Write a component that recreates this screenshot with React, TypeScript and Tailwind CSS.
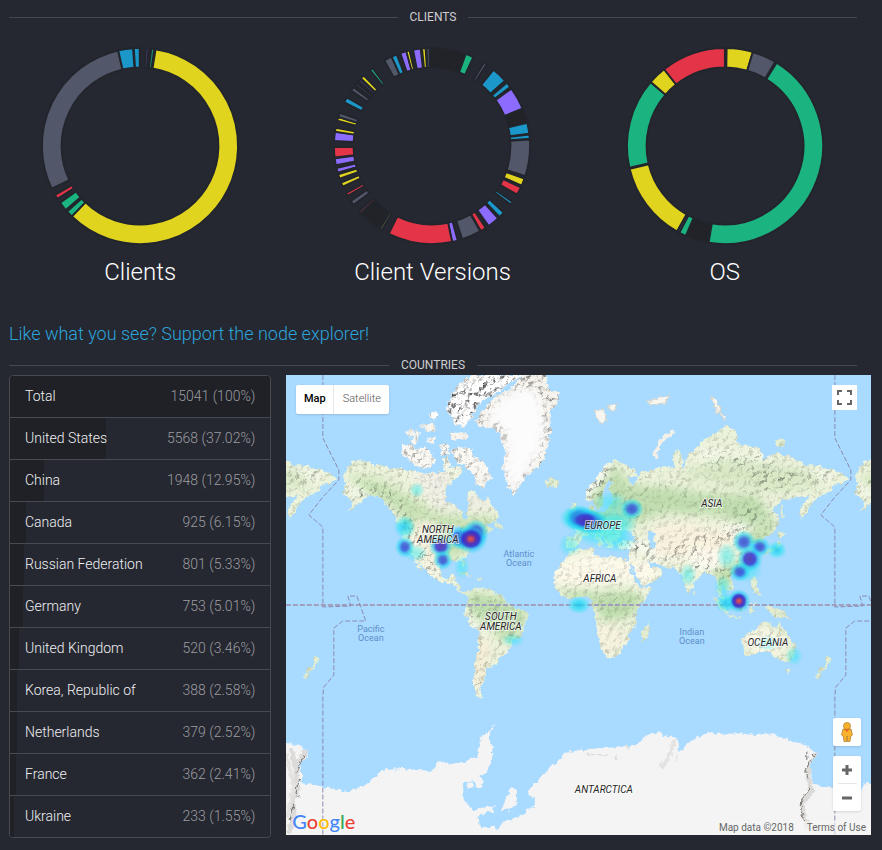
// App.tsx
import React from "react";

type Slice = [start: number, end: number, color: string];

const YELLOW = "#e0d41f";
const GREEN = "#1bb380";
const RED = "#e43447";
const BLUE = "#1b98c9";
const PURPLE = "#8c6cff";
const GREY = "#52586a";
const DARK = "#212329";

// Angles are degrees, clockwise from the top of the ring
const clients: Slice[] = [
  [3.4, 5, "#4b3f7a"],
  [6.6, 8.4, "#188c6c"],
  [9.2, 224, YELLOW],
  [224.2, 228, GREEN],
  [229.2, 234.6, GREEN],
  [237.4, 240, RED],
  [244.2, 347, GREY],
  [347.2, 355.9, BLUE],
  [356.4, 359.8, BLUE],
];

const versions: Slice[] = [
  [-2, 20, DARK],
  [20.2, 24.9, GREEN],
  [32, 33.8, GREY],
  [38.9, 48.1, BLUE],
  [49.8, 52.9, BLUE],
  [54.2, 67.5, PURPLE],
  [67.6, 76, DARK],
  [76.3, 82.7, BLUE],
  [83.3, 85.7, BLUE],
  [86.2, 107.9, GREY],
  [109.4, 113.8, YELLOW],
  [115, 119.7, RED],
  [124.8, 126.6, BLUE],
  [132.9, 136.4, BLUE],
  [137.6, 144.7, PURPLE],
  [146.8, 150.1, RED],
  [150.6, 162, GREY],
  [164.8, 168.1, PURPLE],
  [168.2, 206.2, RED],
  [210.8, 212.3, "#555a3c"],
  [213, 226, DARK],
  [226.6, 228.2, "#63303f"],
  [233.1, 235.9, GREY],
  [239.4, 241.2, RED],
  [245.6, 248.1, YELLOW],
  [250.5, 253.2, YELLOW],
  [254.3, 257, PURPLE],
  [258.7, 262.7, PURPLE],
  [263.3, 269.4, RED],
  [273, 278.3, PURPLE],
  [278.4, 280.7, YELLOW],
  [285, 287.1, YELLOW],
  [287.3, 289.8, GREY],
  [296.5, 299.6, BLUE],
  [304.5, 306.8, GREY],
  [308.4, 310, "#383c4a"],
  [311.4, 313, "#40386b"],
  [313.6, 315.9, YELLOW],
  [320.8, 322.6, GREEN],
  [330.9, 335.6, GREY],
  [335.7, 338.9, BLUE],
  [341.2, 344.8, PURPLE],
  [344.9, 346.7, YELLOW],
  [348.9, 353.3, PURPLE],
  [354.2, 356.2, YELLOW],
  [356.8, 358.5, GREY],
];

const systems: Slice[] = [
  [1, 16.4, YELLOW],
  [16.5, 30.8, GREY],
  [31.8, 189.6, GREEN],
  [190, 203, DARK],
  [203.6, 207.8, GREEN],
  [207.8, 209.3, "#40386b"],
  [209.4, 256.5, YELLOW],
  [257.2, 310.6, GREEN],
  [310.8, 321.5, YELLOW],
  [321.6, 359.9, RED],
];

const countries = [
  { name: "Total", nodes: 15041, share: "100" },
  { name: "United States", nodes: 5568, share: "37.02" },
  { name: "China", nodes: 1948, share: "12.95" },
  { name: "Canada", nodes: 925, share: "6.15" },
  { name: "Russian Federation", nodes: 801, share: "5.33" },
  { name: "Germany", nodes: 753, share: "5.01" },
  { name: "United Kingdom", nodes: 520, share: "3.46" },
  { name: "Korea, Republic of", nodes: 388, share: "2.58" },
  { name: "Netherlands", nodes: 379, share: "2.52" },
  { name: "France", nodes: 362, share: "2.41" },
  { name: "Ukraine", nodes: 233, share: "1.55" },
];

const ringPath = (start: number, end: number) => {
  const at = (deg: number, r: number) => {
    const rad = ((deg - 90) * Math.PI) / 180;
    return `${(98 + r * Math.cos(rad)).toFixed(2)} ${(98 + r * Math.sin(rad)).toFixed(2)}`;
  };
  const large = end - start > 180 ? 1 : 0;
  return `M${at(start, 98)}A98 98 0 ${large} 1 ${at(end, 98)}L${at(end, 78.5)}A78.5 78.5 0 ${large} 0 ${at(start, 78.5)}Z`;
};

const Donut: React.FC<{ title: string; slices: Slice[] }> = ({ title, slices }) => (
  <div className="flex flex-col items-center">
    <svg width="196" height="196" viewBox="0 0 196 196" className="overflow-visible" role="img" aria-label={title}>
      {slices.map(([start, end, color]) => (
        <path key={start} d={ringPath(start, end)} fill={color} stroke="#22252c" strokeWidth="1.8" />
      ))}
    </svg>
    <h3 className="mt-3 text-2xl font-light text-white">{title}</h3>
  </div>
);

const SectionTitle: React.FC<{ children: React.ReactNode }> = ({ children }) => (
  <h2 className="flex h-5 items-center gap-3 text-xs text-[#cdced0]">
    <span className="h-px flex-1 bg-[#464850]" />
    {children}
    <span className="h-px flex-1 bg-[#464850]" />
  </h2>
);

const CountryTable: React.FC = () => (
  <div className="overflow-hidden rounded border border-[#484a52]">
    <table className="w-full border-separate border-spacing-0 text-sm">
      <tbody>
        {countries.map((c) => (
          <tr
            key={c.name}
            className="group"
            style={{
              backgroundImage: `linear-gradient(to right, #1f2127 ${c.share}%, transparent ${c.share}%)`,
            }}
          >
            <th
              scope="row"
              className="h-[42px] border-b border-[#484a52] pb-0.5 pl-[15px] text-left font-light text-[#f0f0f1] group-last:h-[41px] group-last:border-b-0"
            >
              {c.name}
            </th>
            <td className="border-b border-[#484a52] pb-0.5 pr-[15px] text-right font-light text-[#9b9ca0] group-last:border-b-0">
              {c.nodes} ({c.share}%)
            </td>
          </tr>
        ))}
      </tbody>
    </table>
  </div>
);

// ---- map ----

const MAINLAND = [
  // North America
  "M57 102L60 95 68 85 78 86 88 90 97 90 106 94 115 92 122 97 129 96 139 99 150 97 158 96 157 84 161 82 165 93 170 91 176 93 176 100 169 104 163 110 161 116 159 126 168 130 176 136 176 141 179 147 182 142 181 138 183 131 182 123 182 116 189 116 193 123 198 127 202 122 206 130 213 141 208 147 202 148 199 149 203 152 206 156 199 160 193 161 188 167 185 177 178 183 180 192 177 192 175 186 165 186 156 187 154 197 158 203 163 203 165 199 169 199 168 207 174 208 174 215 178 217 182 216 183 219 179 219 175 218 168 211 159 207 155 207 144 201 142 196 136 190 131 183 134 189 137 196 134 194 129 188 127 180 121 177 117 168 117 152 111 145 104 133 94 123 84 120 77 126 68 132 60 137 68 127 63 124 57 118 60 110Z",
  // South America
  "M182 218L191 212 205 215 213 220 219 223 222 229 230 233 238 235 243 239 240 247 238 256 233 263 225 268 223 274 219 280 212 284 212 289 205 291 200 294 200 300 198 306 195 312 195 318 198 324 192 322 188 313 187 306 189 296 189 287 192 275 194 256 185 250 178 238 179 232 182 227Z",
  // Africa
  "M284 176L307 173 309 179 321 184 324 181 338 183 342 188 345 198 349 206 354 213 365 212 361 223 350 236 350 251 343 259 343 265 338 272 331 281 321 283 318 278 314 268 310 254 311 243 306 232 306 224 300 221 287 223 281 224 274 218 268 210 269 199 274 190 280 183Z",
  // Europe and Asia
  "M280 173L280 162 290 161 291 156 287 151 296 145 300 141 304 138 304 131 308 130 309 138 320 137 323 131 327 125 336 123 326 122 323 114 328 106 324 104 318 113 317 120 317 128 312 136 307 125 301 127 300 117 310 104 318 91 330 85 337 88 350 95 352 102 341 102 344 109 350 107 355 97 362 97 370 94 378 91 388 93 387 78 393 75 397 82 397 96 401 80 407 76 417 65 432 57 441 50 450 56 454 70 465 72 474 73 478 84 492 78 506 82 520 90 535 91 549 95 563 104 556 108 546 111 546 115 535 121 525 128 523 134 516 144 514 137 516 130 525 120 513 122 496 125 486 136 493 142 492 151 485 160 478 164 478 174 473 177 472 171 465 168 460 170 466 173 464 177 467 185 461 194 450 199 444 201 448 211 442 217 437 211 435 218 441 228 436 225 432 217 431 205 424 198 417 199 407 209 407 213 402 218 397 204 395 199 388 193 374 191 365 186 361 185 367 193 372 192 377 197 367 207 356 212 348 199 342 188 344 174 333 175 331 168 343 165 351 166 346 159 343 157 337 155 333 162 330 167 326 167 327 173 322 173 320 165 311 157 318 167 315 173 310 164 305 159 297 162 293 168 290 173Z",
];

const ISLANDS = [
  "M286 148L294 146 294 142 290 134 290 128 285 128 286 137Z",
  "M279 145L284 144 284 138 280 139Z",
  "M259 105L267 103 274 106 272 111 264 112 260 110Z",
  "M493 157L500 158 496 163 492 162Z",
  "M494 164L495 171 489 176 479 179 483 174 490 172Z",
  "M495 143L498 141 497 130 495 132Z",
  "M428 222L436 228 444 238 441 240 432 231Z",
  "M443 240L456 243 455 244 443 242Z",
  "M448 227L458 221 462 224 458 236 450 234Z",
  "M463 229L472 227 466 232 469 238 464 237Z",
  "M465 203L470 203 472 213 475 221 468 218Z",
  "M479 231L488 232 499 236 506 245 498 242 490 243 484 237Z",
  "M362 247L364 254 360 265 356 266 355 258Z",
  "M407 215L410 219 408 221Z",
  "M539 279L545 286 541 292 536 297 532 304 529 303 533 296 540 290Z",
  "M499 293L505 293 503 298Z",
  "M172 198L180 197 187 202 179 200Z",
  "M189 203L197 204 193 206Z",
  "M209 147L216 150 216 153 208 152Z",
  "M488 65L498 64 499 70 492 72Z",
  "M455 264L460 259 470 254 476 248 483 247 486 251 490 254 493 247 498 254 504 262 510 271 509 280 504 287 498 287 490 283 485 277 475 277 465 281 458 280Z",
];

const ARCTIC = [
  "M165 75L174 72 184 74 190 82 200 90 206 103 200 108 198 114 190 110 187 98 178 90 172 88Z",
  "M160 32L167 18 174 8 188 0 237 0 222 9 208 20 198 24 190 34 184 44 178 53 168 48Z",
  "M115 70L126 69 130 75 140 72 150 86 146 92 136 94 124 86 116 80Z",
  "M119 57L126 54 130 60 124 63Z",
  "M134 50L146 48 150 55 142 57Z",
  "M154 70L163 68 163 80 156 80Z",
  "M164 58L180 57 182 64 166 66Z",
  "M142 40L150 36 153 42 146 45Z",
  "M125 68L131 54 134 58 130 69Z",
  "M142 62L150 62 148 69 141 68Z",
];

const GREENLAND =
  "M194 52L190 45 196 36 203 29 209 22 218 17 227 12 237 0 259 0 262 15 274 17 272 27 264 38 265 55 261 75 257 88 244 98 232 112 229 121 222 112 217 92 220 78 214 58 206 52Z";

const ANTARCTICA =
  "M-20 366L0 367 8 369 20 374 23 380 16 386 13 392 17 400 15 408 33 411 62 417 76 411 82 408 88 402 97 395 117 394 130 395 147 396 153 386 165 389 177 387 192 382 192 374 195 362 203 357 211 348 202 362 207 372 207 382 201 397 190 405 177 407 178 425 187 434 200 434 199 440 191 446 197 452 209 452 211 457 217 447 232 442 249 430 249 423 242 420 245 412 255 402 261 395 271 387 279 378 300 374 320 373 341 371 351 369 361 360 371 357 380 361 391 363 393 377 406 365 422 358 440 359 452 358 470 360 486 358 500 364 519 370 532 378 526 386 525 394 527 410 549 412 562 416 574 416 580 408 605 407 605 480 -20 480Z";

const DATE_LINE =
  "M37 0V63L53 95V105L37 122L23 140L37 152V232L65 231L62 221H71L80 246H57L48 253V300L38 312L37 320V460";

type Spot = [x: number, y: number, rx: number, ry: number, kind: "faint" | "cool" | "warm" | "deep" | "hot"];

const spots: Spot[] = [
  [131, 115, 8, 8, "faint"],
  [119, 152, 11, 12, "cool"],
  [130, 178, 12, 9, "faint"],
  [119, 172, 10, 11, "warm"],
  [155, 171, 12, 12, "deep"],
  [157, 185, 10, 10, "warm"],
  [176, 192, 8, 12, "faint"],
  [190, 158, 13, 14, "deep"],
  [174, 163, 13, 12, "deep"],
  [185, 164, 17, 15, "hot"],
  [318, 154, 32, 21, "faint"],
  [312, 152, 32, 18, "faint"],
  [335, 147, 18, 14, "faint"],
  [284, 170, 12, 12, "faint"],
  [325, 128, 18, 12, "faint"],
  [332, 166, 18, 12, "faint"],
  [291, 143, 18, 13, "cool"],
  [294, 143, 17, 13, "deep"],
  [305, 147, 18, 13, "deep"],
  [299, 145, 19, 12, "deep"],
  [346, 134, 12, 11, "warm"],
  [293, 230, 12, 9, "cool"],
  [458, 167, 12, 12, "warm"],
  [474, 172, 11, 10, "warm"],
  [491, 175, 10, 9, "cool"],
  [441, 181, 11, 14, "faint"],
  [463, 194, 14, 14, "faint"],
  [464, 184, 13, 13, "deep"],
  [454, 197, 11, 10, "warm"],
  [440, 228, 11, 10, "cool"],
  [453, 226, 12, 12, "hot"],
  [402, 200, 9, 12, "faint"],
  [437, 212, 9, 12, "faint"],
  [227, 265, 12, 7, "faint"],
  [482, 268, 12, 8, "faint"],
  [508, 281, 9, 10, "faint"],
];

// One turn of the globe, 512 units wide
const World: React.FC<{ x: number }> = ({ x }) => (
  <g transform={`translate(${x} 0)`}>
    <g filter="url(#coast)">
      {MAINLAND.map((d) => (
        <path key={d} d={d} fill="#e6efce" />
      ))}
      {ISLANDS.map((d) => (
        <path key={d} d={d} fill="#dbe8c3" />
      ))}
      {ARCTIC.map((d) => (
        <path key={d} d={d} fill="#f4f1e6" />
      ))}
      <g clipPath="url(#land)">
        <g filter="url(#soft)">
          {/* forests */}
          <path d="M62 100L95 104 122 120 150 138 190 142 208 140 206 155 180 178 160 185 148 168 125 160 108 135 80 118Z" fill="#c9e2b6" />
          <path d="M182 216L215 222 242 238 236 256 218 268 206 250 190 244 182 230Z" fill="#bfdeaf" />
          <path d="M272 214L312 218 350 216 358 226 346 240 320 248 306 228 282 222Z" fill="#bfdeae" />
          <path d="M298 150L306 120 330 90 345 110 380 112 420 118 470 120 486 140 470 152 430 140 380 138 340 150Z" fill="#c1deb0" />
          <path d="M390 100L440 82 520 94 540 110 490 118 440 110Z" fill="#d9e9c6" />
          <path d="M425 195L470 182 466 196 446 206 438 222Z" fill="#c3dfb0" />
          <path d="M455 165L490 140 486 165 475 176Z" fill="#c6e0b4" />
          {/* dry land */}
          <path d="M268 190L300 178 345 184 372 186 375 200 352 212 340 206 290 210 266 208Z" fill="#fdf9ea" />
          <path d="M365 150L400 146 450 158 462 168 430 178 395 184 370 182Z" fill="#f8f2de" />
          <path d="M310 252L328 248 340 262 328 282 316 276Z" fill="#f7f2de" />
          <path d="M454 262L478 252 500 264 498 278 470 280Z" fill="#fdf9ea" />
          <path d="M130 145L150 148 152 176 158 200 140 192 124 168Z" fill="#f4f0dc" />
          <path d="M186 262L206 268 200 312 190 316Z" fill="#f4eed6" />
          <path d="M120 96L165 92 160 128 176 138 150 132Z" fill="#f1f0e6" />
          <path d="M182 116L204 122 206 136 184 138Z" fill="#eeefe2" />
          <path d="M402 172L435 178 438 190 414 188Z" fill="#fffaf0" />
        </g>
        <rect width="585" height="330" fill="#ffffff" filter="url(#relief)" mask="url(#ranges)" style={{ mixBlendMode: "multiply" }} />
      </g>
      {/* inland water */}
      <path d="M361 158L368 156 371 160 367 163 370 173 365 174Z" fill="#a9daff" />
      <path d="M165 153L172 151 177 155 172 158 168 162Z" fill="#a9daff" />
      <path d="M345 190L349 199 356 212" fill="none" stroke="#a9daff" strokeWidth="2" />
      {/* ice */}
      <path d={GREENLAND} fill="#f6f3ec" />
      <path d={GREENLAND} fill="#ffffff" filter="url(#relief)" opacity="0.8" style={{ mixBlendMode: "multiply" }} />
      <g clipPath="url(#greenland)">
        <path d="M198 44L216 22 244 10 256 24 260 50 256 76 240 98 229 120 219 98 222 74 216 52Z" fill="#fcfcfd" filter="url(#soft)" />
      </g>
      <path d="M371 84L369 78 375 66 388 56" fill="none" stroke="#f3f0e8" strokeWidth="4" />
      <path d="M309 36L318 34 322 44 316 50 312 44ZM322 30L330 29 329 36 323 36ZM360 26L370 24 384 20 380 28 366 29ZM426 22L431 24 435 38 430 36ZM434 37L441 42 438 45Z" fill="#f7f5ef" stroke="#d8d4ca" strokeWidth="1" />
    </g>
  </g>
);

const Label: React.FC<{ x: number; y: number; lines: string[] }> = ({ x, y, lines }) => (
  <text x={x} y={y} textAnchor="middle" className="fill-[#262626] stroke-white/60 text-[10px] italic" strokeWidth="2" paintOrder="stroke">
    {lines.map((line, i) => (
      <tspan key={line} x={x} dy={i ? 10 : 0}>
        {line}
      </tspan>
    ))}
  </text>
);

const Ocean: React.FC<{ x: number; y: number; name: string }> = ({ x, y, name }) => (
  <text x={x} y={y} textAnchor="middle" className="fill-[#5e8fcb] text-[9px]">
    <tspan x={x}>{name}</tspan>
    <tspan x={x} dy="9">
      Ocean
    </tspan>
  </text>
);

const NodeMap: React.FC = () => (
  <div className="relative h-[460px] overflow-hidden bg-[#a9daff]">
    <svg className="absolute inset-0 h-full w-full" viewBox="0 0 585 460" preserveAspectRatio="xMidYMid slice" role="img" aria-label="Node heat map">
      <defs>
        <filter id="coast" filterUnits="userSpaceOnUse" x="-10" y="-10" width="605" height="480">
          <feTurbulence type="fractalNoise" baseFrequency="0.22" numOctaves="3" seed="4" />
          <feDisplacementMap in="SourceGraphic" scale="6" xChannelSelector="R" yChannelSelector="G" />
        </filter>
        <filter id="soft" x="-20%" y="-20%" width="140%" height="140%">
          <feGaussianBlur stdDeviation="4" />
        </filter>
        <filter id="relief" filterUnits="userSpaceOnUse" x="0" y="0" width="585" height="460" colorInterpolationFilters="sRGB">
          <feTurbulence type="fractalNoise" baseFrequency="0.2" numOctaves="3" seed="9" />
          <feDiffuseLighting surfaceScale="3" diffuseConstant="1.22" lightingColor="#ffffff" result="lit">
            <feDistantLight azimuth="225" elevation="60" />
          </feDiffuseLighting>
          <feComposite in="lit" in2="SourceAlpha" operator="in" />
        </filter>
        <clipPath id="land">
          <path d={[...MAINLAND, ...ISLANDS, ...ARCTIC].join("")} />
        </clipPath>
        <clipPath id="greenland">
          <path d={GREENLAND} />
        </clipPath>
        <clipPath id="antarctica">
          <path d={ANTARCTICA} />
        </clipPath>
        <mask id="ranges" maskUnits="userSpaceOnUse" x="0" y="0" width="585" height="460">
          <rect width="585" height="460" fill="#444444" />
          <g fill="none" stroke="#ffffff" strokeLinecap="round" filter="url(#soft)">
            <path d="M70 116L95 112 110 130 125 155 135 175 150 198" strokeWidth="9" opacity="0.7" />
            <path d="M183 232L190 255 193 290 190 318" strokeWidth="5" opacity="0.7" />
            <path d="M302 122L320 95" strokeWidth="9" />
            <path d="M335 170L360 172 375 182 M385 180L400 170 425 162 M400 175L415 190 435 194 M430 165L470 142" strokeWidth="8" opacity="0.9" />
            <path d="M420 80L455 85 480 100 540 102 M475 78L482 108" strokeWidth="14" opacity="0.4" />
            <path d="M165 35L230 5" strokeWidth="40" />
            <path d="M120 80L200 85" strokeWidth="30" opacity="0.4" />
          </g>
        </mask>
        <radialGradient id="faint">
          <stop offset="0" stopColor="#22eaf0" stopOpacity="0.5" />
          <stop offset="0.5" stopColor="#22eaf0" stopOpacity="0.32" />
          <stop offset="1" stopColor="#22eaf0" stopOpacity="0" />
        </radialGradient>
        <radialGradient id="cool">
          <stop offset="0" stopColor="#18c4ee" stopOpacity="0.85" />
          <stop offset="0.5" stopColor="#1fe3f2" stopOpacity="0.6" />
          <stop offset="1" stopColor="#22eaf0" stopOpacity="0" />
        </radialGradient>
        <radialGradient id="warm">
          <stop offset="0" stopColor="#3a4ed0" stopOpacity="0.92" />
          <stop offset="0.35" stopColor="#3463e0" stopOpacity="0.85" />
          <stop offset="0.65" stopColor="#1fd0f2" stopOpacity="0.6" />
          <stop offset="1" stopColor="#22eaf0" stopOpacity="0" />
        </radialGradient>
        <radialGradient id="deep">
          <stop offset="0" stopColor="#5030b4" stopOpacity="0.9" />
          <stop offset="0.42" stopColor="#3a40d4" stopOpacity="0.88" />
          <stop offset="0.68" stopColor="#1fc4f2" stopOpacity="0.6" />
          <stop offset="1" stopColor="#22eaf0" stopOpacity="0" />
        </radialGradient>
        <radialGradient id="hot">
          <stop offset="0" stopColor="#e8503c" stopOpacity="0.95" />
          <stop offset="0.14" stopColor="#c04060" stopOpacity="0.95" />
          <stop offset="0.3" stopColor="#5a2cae" stopOpacity="0.95" />
          <stop offset="0.5" stopColor="#3038d2" stopOpacity="0.92" />
          <stop offset="0.7" stopColor="#1fc4f2" stopOpacity="0.6" />
          <stop offset="1" stopColor="#22eaf0" stopOpacity="0" />
        </radialGradient>
      </defs>

      <World x={-512} />
      <World x={0} />
      <World x={512} />

      <g filter="url(#coast)">
        <path d={ANTARCTICA} fill="#f4f4f4" />
        <path d="M216 435L221 421 226 412 231 416 231 430 223 435ZM194 433L209 431 207 437 194 439ZM181 408L187 406 187 412 182 414ZM189 403L196 402 197 412 190 412Z" fill="#f4f4f4" />
        <path d="M191 442L197 438 200 446 196 452Z" fill="#a9daff" />
        <g clipPath="url(#antarctica)" fill="none" strokeLinecap="round">
          <path d="M20 376L12 388 10 400 12 414 7 426 8 440 4 456 M6 376L10 392 M532 378L524 390 522 402 526 416 518 426 517 438 522 450" stroke="#dcdbd9" strokeWidth="5" />
          <path d="M22 379L15 384 11 398 M14 404L10 416 13 422 M8 430L4 446 M530 379L524 386 520 396 523 404 M524 414L516 424 515 436 519 446 M521 376L521 384" stroke="#77736f" strokeWidth="1" />
          <path d="M391 380L391 386 M341 371L342 374 M330 380V383 M300 379L320 380" stroke="#cfcecc" strokeWidth="1" />
          <path d="M388 366L383 382 376 392 M0 380L8 410 2 440" stroke="#e4e3e1" strokeWidth="4" />
        </g>
      </g>

      <g fill="none" stroke="#8c8bb0" strokeDasharray="5 2">
        <path d="M0 230H585" strokeWidth="2" stroke="#a09fbf" />
        <path d={DATE_LINE} />
        <path d={DATE_LINE} transform="translate(512 0)" />
      </g>

      {spots.map(([cx, cy, rx, ry, kind]) => (
        <ellipse key={`${cx}-${cy}`} cx={cx} cy={cy} rx={rx} ry={ry} fill={`url(#${kind})`} />
      ))}

      <Label x={152} y={158} lines={["NORTH", "AMERICA"]} />
      <Label x={215} y={245} lines={["SOUTH", "AMERICA"]} />
      <Label x={317} y={154} lines={["EUROPE"]} />
      <Label x={314} y={207} lines={["AFRICA"]} />
      <Label x={426} y={132} lines={["ASIA"]} />
      <Label x={482} y={271} lines={["OCEANIA"]} />
      <Label x={318} y={418} lines={["ANTARCTICA"]} />
      <Ocean x={233} y={182} name="Atlantic" />
      <Ocean x={85} y={257} name="Pacific" />
      <Ocean x={406} y={260} name="Indian" />
    </svg>

    {/* Map type */}
    <div className="absolute left-[10px] top-[10px] flex h-[29px] rounded-xs bg-white text-[11px] shadow">
      <button className="w-[38px] border-r border-gray-200 font-medium text-black">Map</button>
      <button className="w-[55px] font-light text-[#565656]">Satellite</button>
    </div>

    <button aria-label="Toggle fullscreen" className="absolute right-[14px] top-[10px] flex size-[25px] items-center justify-center bg-white">
      <svg width="15" height="15" viewBox="0 0 15 15" fill="none" stroke="#666" strokeWidth="2">
        <path d="M1 5V1H5M10 1H14V5M14 10V14H10M5 14H1V10" />
      </svg>
    </button>

    {/* Street view + zoom */}
    <div className="absolute bottom-6 right-[10px] flex w-7 flex-col gap-[10px]">
      <button aria-label="Street View" className="flex h-7 items-center justify-center rounded-xs bg-white shadow">
        <svg width="14" height="20" viewBox="0 0 14 20">
          <path d="M3 7H11L12.500 13 10.800 14 10 19.500H7.400L7 14 6.600 19.500H4L3.200 14 1.500 13Z" fill="#fbb32c" stroke="#a9772a" strokeWidth="0.700" />
          <circle cx="7" cy="4" r="3.500" fill="#fbb32c" stroke="#a9772a" strokeWidth="0.700" />
          <path d="M4.500 7.200H9.500L7 10Z" fill="#e2642c" />
        </svg>
      </button>
      <div className="flex flex-col items-center rounded-xs bg-white shadow">
        <button aria-label="Zoom in" className="flex h-[27px] w-full items-center justify-center">
          <svg width="10" height="10" viewBox="0 0 10 10" stroke="#666" strokeWidth="3">
            <path d="M0 5H10M5 0V10" />
          </svg>
        </button>
        <span className="h-px w-[19px] bg-[#e6e6e6]" />
        <button aria-label="Zoom out" className="flex h-[27px] w-full items-center justify-center">
          <svg width="10" height="10" viewBox="0 0 10 10" stroke="#666" strokeWidth="3">
            <path d="M0 5H10" />
          </svg>
        </button>
      </div>
    </div>

    <a
      href="#google"
      className="absolute bottom-0 left-[6px] font-['Lato','Open_Sans',sans-serif] text-[20px] font-medium leading-7 [text-shadow:0_0_2px_white]"
    >
      <span className="text-[#4285f4]">G</span>
      <span className="text-[#ea4335]">o</span>
      <span className="text-[#fbbc05]">o</span>
      <span className="text-[#4285f4]">g</span>
      <span className="text-[#34a853]">l</span>
      <span className="text-[#ea4335]">e</span>
    </a>
    <div className="absolute bottom-0 right-0 flex gap-[13px] bg-[#f5f5f5]/60 pr-[5px] text-[10px] leading-[14px] text-[#666]">
      <span>Map data ©2018</span>
      <a href="#terms">Terms of Use</a>
    </div>
  </div>
);

const App: React.FC = () => {
  return (
    <main className="min-h-screen overflow-hidden bg-[#262831] pb-3 pl-[9px] pr-[25px] pt-[7px] font-[Roboto,sans-serif]">
      <SectionTitle>CLIENTS</SectionTitle>
      <div className="-ml-[15px] -mr-[14px] mt-[21px] grid grid-cols-3">
        <Donut title="Clients" slices={clients} />
        <Donut title="Client Versions" slices={versions} />
        <Donut title="OS" slices={systems} />
      </div>

      <p className="mt-8 text-lg font-light leading-7">
        <a href="#support" className="text-[#2ba4dc]">
          Like what you see? Support the node explorer!
        </a>
      </p>

      <div className="mt-[7px]">
        <SectionTitle>COUNTRIES</SectionTitle>
      </div>
      <div className="-ml-[15px] -mr-[14px] grid grid-cols-3">
        <div className="px-[15px]">
          <CountryTable />
        </div>
        <div className="col-span-2">
          <NodeMap />
        </div>
      </div>
    </main>
  );
};

export default App;
